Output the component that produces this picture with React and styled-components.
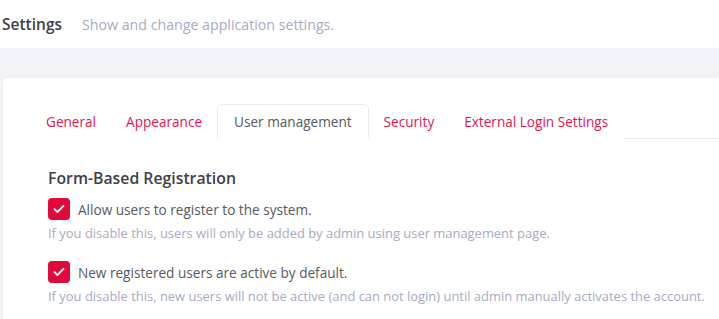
import React from 'react';
import styled, { createGlobalStyle } from 'styled-components';

const GlobalStyle = createGlobalStyle`
  html, body {
    margin: 0;
    padding: 0;
    background: #f2f3f8;
    font-family: "Open Sans", "Liberation Sans", sans-serif;
  }
`;

const Page = styled.div`
  width: 719px;
  height: 319px;
  overflow: hidden;
  background: #f2f3f8;
`;

const Header = styled.div`
  height: 48px;
  background: #ffffff;
  display: flex;
  align-items: center;
  padding: 0 2px;
  box-sizing: border-box;
`;

const Title = styled.h3`
  margin: 0 20px 0 0;
  font-size: 15.5px;
  font-weight: 600;
  color: #3f4047;
`;

const Subtitle = styled.span`
  font-size: 14.2px;
  color: #a7abc3;
`;

const Card = styled.div`
  margin: 30px 0 0 3px;
  background: #ffffff;
  border-radius: 4px 0 0 0;
  padding: 26px 0 0 28px;
  height: 260px;
  box-shadow: 0 0 2px rgba(82, 63, 105, 0.08);
`;

const TabBar = styled.ul`
  display: flex;
  list-style: none;
  margin: 0;
  padding: 0;
  border-bottom: 1px solid #ebedf2;
`;

const Tab = styled.li`
  padding: 0 ${(p) => (p.$active ? '16px' : '14px')};
  height: 33px;
  display: flex;
  align-items: center;
  font-size: 13.6px;
  color: ${(p) => (p.$active ? '#575962' : '#e0174f')};
  margin-bottom: -1px;
  border: 1px solid ${(p) => (p.$active ? '#ebedf2' : 'transparent')};
  border-bottom-color: ${(p) => (p.$active ? '#ffffff' : 'transparent')};
  border-radius: 5px 5px 0 0;
  background: #ffffff;
`;

const Content = styled.div`
  padding: 28px 0 0 17px;
`;

const SectionTitle = styled.h5`
  margin: 0 0 9px;
  font-size: 15.8px;
  font-weight: 600;
  color: #3f4047;
`;

const Option = styled.div`
  margin-bottom: 19px;
`;

const CheckRow = styled.label`
  display: flex;
  align-items: center;
  gap: 8px;
  font-size: 13.6px;
  color: #575962;
`;

const Box = styled.span`
  width: 22px;
  height: 22px;
  border-radius: 4px;
  background: #e0093a;
  display: flex;
  align-items: center;
  justify-content: center;
  flex-shrink: 0;
`;

const Help = styled.div`
  margin-top: 4px;
  font-size: 12.95px;
  color: #a7abc3;
`;

const Check = () => (
  <Box>
    <svg width="12" height="10" viewBox="0 0 12 10" fill="none">
      <path d="M1.5 5.2 L4.4 8 L10.5 1.8" stroke="#fff" strokeWidth="1.8" strokeLinecap="round" strokeLinejoin="round" />
    </svg>
  </Box>
);

const tabs = ['General', 'Appearance', 'User management', 'Security', 'External Login Settings'];

export default function App() {
  return (
    <Page>
      <GlobalStyle />
      <Header>
        <Title>Settings</Title>
        <Subtitle>Show and change application settings.</Subtitle>
      </Header>
      <Card>
        <TabBar>
          {tabs.map((t) => (
            <Tab key={t} $active={t === 'User management'}>{t}</Tab>
          ))}
        </TabBar>
        <Content>
          <SectionTitle>Form-Based Registration</SectionTitle>
          <Option>
            <CheckRow><Check />Allow users to register to the system.</CheckRow>
            <Help>If you disable this, users will only be added by admin using user management page.</Help>
          </Option>
          <Option>
            <CheckRow><Check />New registered users are active by default.</CheckRow>
            <Help>If you disable this, new users will not be active (and can not login) until admin manually activates the account.</Help>
          </Option>
        </Content>
      </Card>
    </Page>
  );
}
